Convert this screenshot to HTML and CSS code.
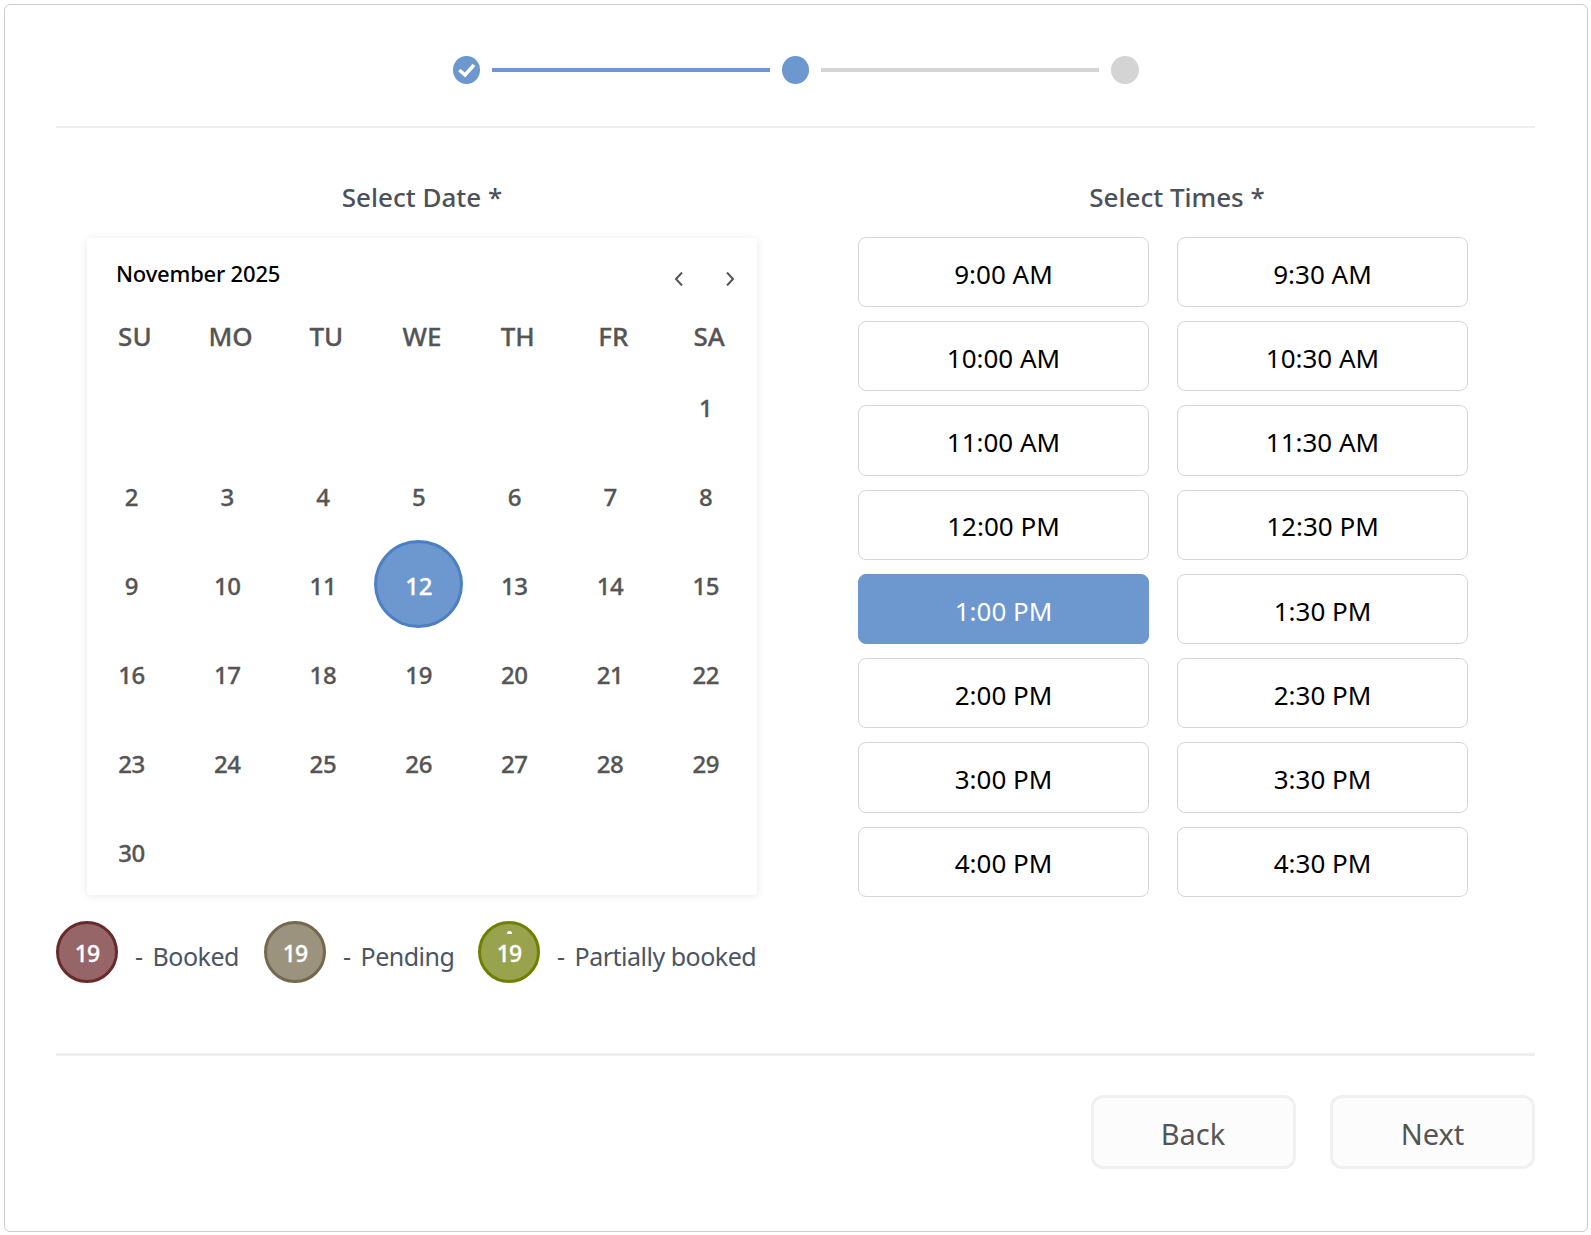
FILE: index.html
```html
<!DOCTYPE html>
<html lang="en">
<head>
<meta charset="utf-8">
<title>Select date and times</title>
<link rel="stylesheet" href="styles.css">
</head>
<body>
<main class="card">
  <div class="stepper">
    <span class="step step-done">
      <svg class="check" viewBox="0 0 27 28" width="27" height="28"><path d="M6.3 14 12 19 21 9" fill="none" stroke="#fff" stroke-width="3.5"/></svg>
    </span>
    <span class="track track-done"></span>
    <span class="step step-current"></span>
    <span class="track"></span>
    <span class="step step-todo"></span>
  </div>
  <hr class="rule-top">
  <div class="panels">
    <section class="date-panel">
      <h2 class="panel-title">Select Date *</h2>
      <div class="calendar">
        <div class="cal-head">
          <span class="month">November 2025</span>
          <span class="cal-nav">
            <svg viewBox="0 0 11 14" width="11" height="14"><path d="M9 .5 3 7l6 6.5" fill="none" stroke="#555" stroke-width="2"/></svg>
            <svg viewBox="0 0 11 14" width="11" height="14"><path d="M2 .5 8 7l-6 6.5" fill="none" stroke="#555" stroke-width="2"/></svg>
          </span>
        </div>
        <div class="weekdays">
          <span>SU</span><span>MO</span><span>TU</span><span>WE</span><span>TH</span><span>FR</span><span>SA</span>
        </div>
        <div class="days">
          <span></span><span></span><span></span><span></span><span></span><span></span>
          <span class="day">1</span>
          <span class="day">2</span><span class="day">3</span><span class="day">4</span><span class="day">5</span><span class="day">6</span><span class="day">7</span><span class="day">8</span>
          <span class="day">9</span><span class="day">10</span><span class="day">11</span><span class="day day-selected">12</span><span class="day">13</span><span class="day">14</span><span class="day">15</span>
          <span class="day">16</span><span class="day">17</span><span class="day">18</span><span class="day">19</span><span class="day">20</span><span class="day">21</span><span class="day">22</span>
          <span class="day">23</span><span class="day">24</span><span class="day">25</span><span class="day">26</span><span class="day">27</span><span class="day">28</span><span class="day">29</span>
          <span class="day">30</span>
        </div>
      </div>
      <div class="legend">
        <span class="badge badge-booked">19</span><span class="legend-label label-booked"><span class="dash">-</span>Booked</span>
        <span class="badge badge-pending">19</span><span class="legend-label label-pending"><span class="dash">-</span>Pending</span>
        <span class="badge badge-partial">19<i class="dot"></i></span><span class="legend-label"><span class="dash">-</span>Partially booked</span>
      </div>
    </section>
    <section class="time-panel">
      <h2 class="panel-title panel-title-times">Select Times *</h2>
      <div class="times">
        <button class="slot">9:00 AM</button><button class="slot">9:30 AM</button>
        <button class="slot">10:00 AM</button><button class="slot">10:30 AM</button>
        <button class="slot">11:00 AM</button><button class="slot">11:30 AM</button>
        <button class="slot">12:00 PM</button><button class="slot">12:30 PM</button>
        <button class="slot slot-selected">1:00 PM</button><button class="slot">1:30 PM</button>
        <button class="slot">2:00 PM</button><button class="slot">2:30 PM</button>
        <button class="slot">3:00 PM</button><button class="slot">3:30 PM</button>
        <button class="slot">4:00 PM</button><button class="slot">4:30 PM</button>
      </div>
    </section>
  </div>
  <hr class="rule-bottom">
  <div class="actions">
    <button class="action">Back</button>
    <button class="action">Next</button>
  </div>
</main>
</body>
</html>
```
FILE: styles.css
```css
* { box-sizing: border-box; }
html, body { margin: 0; padding: 0; background: #fff; }
body { font-family: "Noto Sans", "Open Sans", sans-serif; width: 1591px; height: 1235px; overflow: hidden; padding: 4px; }

.card {
  width: 1584px;
  height: 1228px;
  border: 1px solid #ccc;
  border-radius: 6px;
  padding: 0 52px 0 51px;
  background: #fff;
}

.stepper { height: 121px; padding-top: 51px; display: flex; align-items: flex-start; padding-left: 397px; }
.step { width: 28px; height: 28px; border-radius: 50%; flex: none; display: block; }
.step-done { background: #6c97cf; width: 27px; }
.step-current { background: #6c97cf; width: 27px; }
.step-todo { background: #d4d4d4; }
.check { display: block; }
.track { width: 278px; height: 4px; margin: 12px 12px 0; background: #d4d4d4; flex: none; }
.track-done { background: #6c97cf; }

.rule-top { margin: 0; border: 0; height: 2px; background: #eee; }
.rule-bottom { margin: 0; border: 0; height: 3px; background: #eee; }

.panels { display: flex; height: 925px; }
.date-panel { width: 732px; flex: none; }
.time-panel { flex: 1; padding: 0 39px 0 70px; }

.panel-title {
  margin: 0;
  height: 110px;
  padding-top: 50px;
  line-height: 38px;
  font-size: 26px;
  font-weight: 500;
  text-align: center;
  color: #4b5059;
}
.panel-title-times { height: 108.9px; }

.calendar {
  margin-left: 31px;
  width: 670px;
  height: 657px;
  background: #fff;
  border-radius: 4px;
  box-shadow: 0 1px 8px rgba(0, 0, 0, 0.09);
}
.cal-head { height: 62px; display: flex; justify-content: space-between; padding: 18px 21px 0 29px; }
.month { font-size: 22px; font-weight: 500; line-height: 34px; color: #000; letter-spacing: -0.2px; }
.cal-nav { display: flex; gap: 41px; padding-top: 16px; height: 30px; }
.cal-nav svg { display: block; }
.weekdays { height: 62px; padding-top: 10px; display: grid; grid-template-columns: repeat(7, 1fr); align-items: center; text-align: center; font-size: 26px; font-weight: 500; -webkit-text-stroke: 0.3px #555; color: #555; }
.days { display: grid; grid-template-columns: repeat(7, 1fr); grid-template-rows: repeat(5, 89px) 88px; }
.day {
  width: 89px;
  height: 88px;
  display: flex;
  align-items: center;
  justify-content: center;
  padding-top: 2px;
  font-size: 24px;
  font-weight: 500;
  -webkit-text-stroke: 0.3px #555;
  letter-spacing: -0.4px;
  color: #555;
  border-radius: 50%;
}
.day-selected { background: #6c97cf; border: 3px solid #4c80c6; color: #fff; -webkit-text-stroke: 0.3px #fff; }

.legend { display: flex; align-items: flex-start; margin-top: 26px; }
.badge {
  position: relative;
  width: 62px;
  height: 62px;
  flex: none;
  border-radius: 50%;
  border: 3px solid;
  padding-top: 2px;
  display: flex;
  align-items: center;
  justify-content: center;
  font-size: 23px;
  font-weight: 500;
  -webkit-text-stroke: 0.3px #fff;
  letter-spacing: -1px;
  color: #fff;
}
.badge-booked { background: #956567; border-color: #692a2c; }
.badge-pending { background: #9c937e; border-color: #736850; }
.badge-partial { background: #99a34e; border-color: #6f8000; }
.dot { position: absolute; left: 26px; top: 7px; width: 5px; height: 3px; border-radius: 3px 3px 0 0; background: #fff; }
.legend-label { flex: none; font-size: 25px; line-height: 36px; padding-top: 17px; margin-left: 17px; color: #4b5563; white-space: nowrap; letter-spacing: -0.5px; }
.dash { margin-right: 10px; }
.label-booked { width: 129px; }
.label-pending { width: 135px; }

.times { display: grid; grid-template-columns: 291px 291px; column-gap: 28px; row-gap: 14px; grid-auto-rows: 70.25px; }
.slot {
  padding: 3px 0 0;
  font-family: inherit;
  font-size: 26px;
  color: #000;
  background: #fff;
  border: 1px solid #d6d6d6;
  border-radius: 8px;
}
.slot-selected { background: #6c97cf; border-color: #6c97cf; color: #fff; }

.actions { display: flex; justify-content: flex-end; gap: 34.5px; padding-top: 39px; }
.action {
  width: 205px;
  height: 74px;
  padding: 2px 0 0;
  font-family: inherit;
  font-size: 29px;
  color: #555;
  background: #fcfcfc;
  border: 3px solid #f0f0f0;
  border-radius: 12px;
}
```
